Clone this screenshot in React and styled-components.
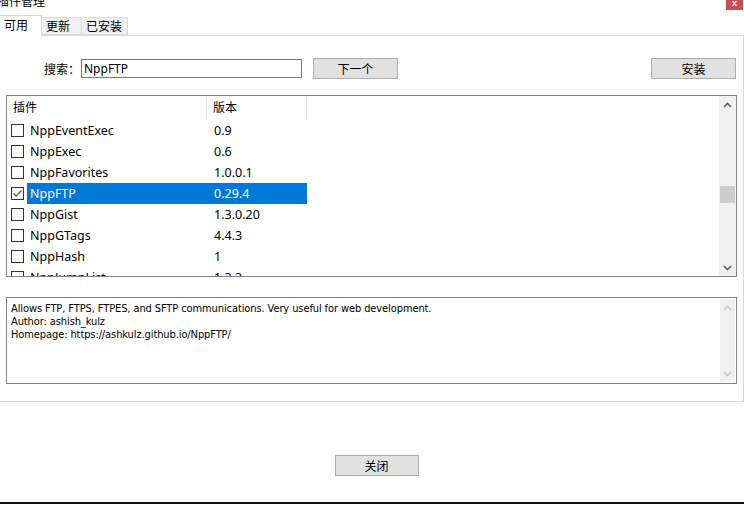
import React from 'react';
import styled, { createGlobalStyle } from 'styled-components';

const GlobalStyle = createGlobalStyle`
  html, body { margin: 0; padding: 0; background: #ffffff; }
  body { font-family: "Noto Sans", "Noto Sans CJK SC", sans-serif; color: #000; }
`;

const CJK = `"Noto Sans CJK SC", "Noto Sans", sans-serif`;

const plugins = [
  { name: 'NppEventExec', ver: '0.9' },
  { name: 'NppExec', ver: '0.6' },
  { name: 'NppFavorites', ver: '1.0.0.1' },
  { name: 'NppFTP', ver: '0.29.4', checked: true, selected: true },
  { name: 'NppGist', ver: '1.3.0.20' },
  { name: 'NppGTags', ver: '4.4.3' },
  { name: 'NppHash', ver: '1' },
  { name: 'NppJumpList', ver: '1.3.3' },
];

const Window = styled.div`
  width: 744px;
  height: 505px;
  overflow: hidden;
  display: flex;
  flex-direction: column;
  background: #fff;
`;

const TitleBar = styled.div`
  height: 15px;
  display: flex;
  justify-content: space-between;
  align-items: flex-start;
  overflow: hidden;
`;

const Title = styled.div`
  font-family: ${CJK};
  font-size: 12px;
  line-height: 12px;
  margin: -5px 0 0 -3px;
  color: #000;
`;

const CloseX = styled.div`
  width: 17px;
  height: 10px;
  margin-right: 1px;
  background: #c75050;
  color: #fff;
  font-size: 9px;
  line-height: 6px;
  text-align: center;
  font-family: "Liberation Sans", sans-serif;
  font-weight: bold;
`;

const TabStrip = styled.div`
  height: 20px;
  display: flex;
  align-items: flex-end;
  position: relative;
  z-index: 1;
`;

const Tab = styled.div`
  box-sizing: border-box;
  width: ${p => p.$w}px;
  height: ${p => (p.$active ? 21 : 18)}px;
  margin-bottom: ${p => (p.$active ? -1 : 0)}px;
  padding-left: 4px;
  border: 1px solid #d9d9d9;
  border-bottom: ${p => (p.$active ? 'none' : '1px solid #d9d9d9')};
  border-left: ${p => (p.$first ? 'none' : '1px solid #d9d9d9')};
  background: ${p => (p.$active ? '#ffffff' : '#f0f0f0')};
  font-family: ${CJK};
  font-size: 12px;
  line-height: ${p => (p.$active ? 18 : 16)}px;
  & + & { margin-left: -1px; }
`;

const Panel = styled.div`
  box-sizing: border-box;
  width: 744px;
  height: 367px;
  border: 1px solid #d9d9d9;
  border-left: none;
  padding: 22px 0 0 6px;
  display: flex;
  flex-direction: column;
`;

const SearchRow = styled.div`
  display: flex;
  align-items: center;
  height: 21px;
  padding-right: 7px;
`;

const Label = styled.div`
  font-family: ${CJK};
  font-size: 12px;
  margin-left: 38px;
  width: 37px;
`;

const TextInput = styled.div`
  box-sizing: border-box;
  width: 221px;
  height: 19px;
  border: 1px solid #7a7a7a;
  font-size: 12px;
  line-height: 17px;
  padding-left: 2px;
  color: #000;
`;

const Button = styled.div`
  box-sizing: border-box;
  width: ${p => p.$w || 85}px;
  height: 21px;
  margin-left: ${p => p.$ml || 0}px;
  background: #e1e1e1;
  border: 1px solid #adadad;
  font-family: ${CJK};
  font-size: 12px;
  line-height: 19px;
  text-align: center;
`;

const Spacer = styled.div`flex: 1;`;

const ListBox = styled.div`
  box-sizing: border-box;
  width: 731px;
  height: 182px;
  margin-top: 16px;
  border: 1px solid #828282;
  display: flex;
  overflow: hidden;
`;

const ListBody = styled.div`
  flex: 1;
  overflow: hidden;
`;

const HeaderRow = styled.div`
  display: flex;
  height: 24px;
`;

const HeaderCell = styled.div`
  box-sizing: border-box;
  width: ${p => p.$w}px;
  padding-left: ${p => p.$pl}px;
  border-right: 1px solid #e5e5e5;
  font-family: ${CJK};
  font-size: 12px;
  line-height: 22px;
`;

const Row = styled.div`
  display: flex;
  height: 21px;
  align-items: center;
`;

const CheckCell = styled.div`
  width: 20px;
  height: 21px;
  display: flex;
  align-items: center;
  padding-left: 4px;
  box-sizing: border-box;
`;

const Checkbox = styled.div`
  box-sizing: border-box;
  width: 13px;
  height: 13px;
  border: 1px solid #333;
  background: #fff;
  display: flex;
  align-items: center;
  justify-content: center;
`;

const Cell = styled.div`
  box-sizing: border-box;
  width: ${p => p.$w}px;
  height: 21px;
  padding-left: ${p => p.$pl}px;
  background: ${p => (p.$sel ? '#0078d7' : 'transparent')};
  color: ${p => (p.$sel ? '#fff' : '#000')};
  font-size: 12.5px;
  line-height: 21px;
  white-space: nowrap;
`;

const Scrollbar = styled.div`
  width: 17px;
  background: #f0f0f0;
  display: flex;
  flex-direction: column;
  align-items: center;
`;

const Arrow = styled.div`
  height: 17px;
  display: flex;
  align-items: center;
  justify-content: center;
`;

const Track = styled.div`
  flex: 1;
  width: 15px;
  padding-top: ${p => p.$thumbTop}px;
`;

const Thumb = styled.div`
  width: 15px;
  height: 17px;
  background: #cdcdcd;
`;

const DescBox = styled.div`
  box-sizing: border-box;
  width: 731px;
  height: 87px;
  margin-top: 20px;
  border: 1px solid #828282;
  display: flex;
`;

const DescText = styled.div`
  flex: 1;
  padding: 4px 0 0 4px;
  font-family: "DejaVu Sans Condensed", "Liberation Sans", sans-serif;
  font-size: 11px;
  letter-spacing: -0.1px;
  line-height: 13px;
  color: #000;
`;

const DescScroll = styled(Scrollbar)`
  margin: 1px 1px 1px 0;
  width: 15px;
`;

const Footer = styled.div`
  height: 100px;
  display: flex;
  justify-content: center;
  padding: 53px 0 0 9px;
  box-sizing: border-box;
`;

const DarkBar = styled.div`
  height: 2px;
  background: #0d1020;
`;

const Chevron = ({ up, color = '#606060' }) => (
  <svg width="9" height="6" viewBox="0 0 9 6">
    <path
      d={up ? 'M1 5 L4.5 1.5 L8 5' : 'M1 1 L4.5 4.5 L8 1'}
      fill="none"
      stroke={color}
      strokeWidth="1.6"
    />
  </svg>
);

const Tick = () => (
  <svg width="11" height="11" viewBox="0 0 11 11">
    <path d="M1.5 5.5 L4.2 8.2 L9.5 2.5" fill="none" stroke="#555" strokeWidth="1.2" />
  </svg>
);

export default function App() {
  return (
    <>
      <GlobalStyle />
      <Window>
        <TitleBar>
          <Title>插件管理</Title>
          <CloseX>x</CloseX>
        </TitleBar>
        <TabStrip>
          <Tab $w={42} $active $first>可用</Tab>
          <Tab $w={41}>更新</Tab>
          <Tab $w={47}>已安装</Tab>
        </TabStrip>
        <Panel>
          <SearchRow>
            <Label>搜索：</Label>
            <TextInput>NppFTP</TextInput>
            <Button $w={85} $ml={11}>下一个</Button>
            <Spacer />
            <Button $w={85}>安装</Button>
          </SearchRow>
          <ListBox>
            <ListBody>
              <HeaderRow>
                <HeaderCell $w={200} $pl={6}>插件</HeaderCell>
                <HeaderCell $w={100} $pl={6}>版本</HeaderCell>
              </HeaderRow>
              {plugins.map(p => (
                <Row key={p.name}>
                  <CheckCell>
                    <Checkbox>{p.checked && <Tick />}</Checkbox>
                  </CheckCell>
                  <Cell $w={180} $pl={3} $sel={p.selected}>{p.name}</Cell>
                  <Cell $w={100} $pl={7} $sel={p.selected}>{p.ver}</Cell>
                </Row>
              ))}
            </ListBody>
            <Scrollbar>
              <Arrow><Chevron up /></Arrow>
              <Track $thumbTop={73}><Thumb /></Track>
              <Arrow><Chevron /></Arrow>
            </Scrollbar>
          </ListBox>
          <DescBox>
            <DescText>
              Allows FTP, FTPS, FTPES, and SFTP communications. Very useful for web development.<br />
              Author: ashish_kulz<br />
              Homepage: https://ashkulz.github.io/NppFTP/
            </DescText>
            <DescScroll>
              <Arrow><Chevron up color="#c8c8c8" /></Arrow>
              <Spacer />
              <Arrow><Chevron color="#c8c8c8" /></Arrow>
            </DescScroll>
          </DescBox>
        </Panel>
        <Footer>
          <Button $w={84}>关闭</Button>
        </Footer>
        <DarkBar />
      </Window>
    </>
  );
}
